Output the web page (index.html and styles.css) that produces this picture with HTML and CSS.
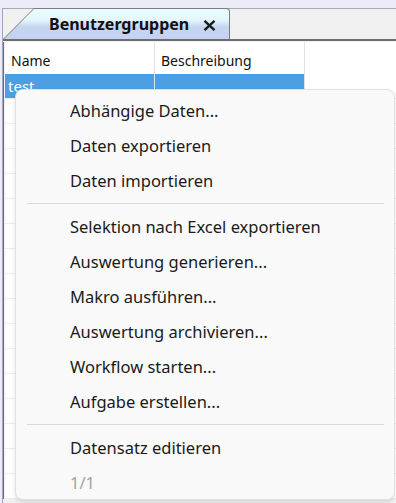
FILE: index.html
```html
<!DOCTYPE html>
<html lang="de">
<head>
<meta charset="utf-8">
<title>Benutzergruppen</title>
<link rel="stylesheet" href="styles.css">
</head>
<body>
<div class="window">
  <div class="frame">
    <div class="tabstrip">
      <div class="tab">
        <div class="tab-inner">
          <span class="tab-title">Benutzergruppen</span>
          <svg class="tab-close" width="13" height="11" viewBox="0 0 13 11"><path d="M1.5 0.8 L11.5 10.2 M11.5 0.8 L1.5 10.2" stroke="#1b1b1b" stroke-width="2.3" fill="none"/></svg>
        </div>
      </div>
    </div>
    <div class="tabline"></div>
    <div class="panel">
      <div class="grid">
        <div class="row head">
          <div class="cell c1">Name</div>
          <div class="cell c2">Beschreibung</div>
          <div class="cell c3"></div>
        </div>
        <div class="row sel">
          <div class="cell c1">test</div>
          <div class="cell c2"></div>
          <div class="cell c3"></div>
        </div>
        <div class="row"><div class="cell c1"></div><div class="cell c2"></div><div class="cell c3"></div></div>
        <div class="row"><div class="cell c1"></div><div class="cell c2"></div><div class="cell c3"></div></div>
        <div class="row"><div class="cell c1"></div><div class="cell c2"></div><div class="cell c3"></div></div>
        <div class="row"><div class="cell c1"></div><div class="cell c2"></div><div class="cell c3"></div></div>
        <div class="row"><div class="cell c1"></div><div class="cell c2"></div><div class="cell c3"></div></div>
        <div class="row"><div class="cell c1"></div><div class="cell c2"></div><div class="cell c3"></div></div>
        <div class="row"><div class="cell c1"></div><div class="cell c2"></div><div class="cell c3"></div></div>
        <div class="row"><div class="cell c1"></div><div class="cell c2"></div><div class="cell c3"></div></div>
        <div class="row"><div class="cell c1"></div><div class="cell c2"></div><div class="cell c3"></div></div>
        <div class="row"><div class="cell c1"></div><div class="cell c2"></div><div class="cell c3"></div></div>
        <div class="row"><div class="cell c1"></div><div class="cell c2"></div><div class="cell c3"></div></div>
        <div class="row"><div class="cell c1"></div><div class="cell c2"></div><div class="cell c3"></div></div>
        <div class="row"><div class="cell c1"></div><div class="cell c2"></div><div class="cell c3"></div></div>
        <div class="row"><div class="cell c1"></div><div class="cell c2"></div><div class="cell c3"></div></div>
        <div class="row"><div class="cell c1"></div><div class="cell c2"></div><div class="cell c3"></div></div>
        <div class="row"><div class="cell c1"></div><div class="cell c2"></div><div class="cell c3"></div></div>
      </div>
    </div>
  </div>
  <div class="menu">
    <div class="item">Abhängige Daten...</div>
    <div class="item">Daten exportieren</div>
    <div class="item">Daten importieren</div>
    <div class="sep"></div>
    <div class="item">Selektion nach Excel exportieren</div>
    <div class="item">Auswertung generieren...</div>
    <div class="item">Makro ausführen...</div>
    <div class="item">Auswertung archivieren...</div>
    <div class="item">Workflow starten...</div>
    <div class="item">Aufgabe erstellen...</div>
    <div class="sep"></div>
    <div class="item">Datensatz editieren</div>
    <div class="item disabled">1/1</div>
  </div>
</div>
</body>
</html>
```

FILE: styles.css
```css
html, body {
  margin: 0;
  padding: 0;
}
body {
  width: 396px;
  height: 503px;
  overflow: hidden;
  background: #ebecf8;
  font-family: "Noto Sans", "Open Sans", sans-serif;
}
.window {
  position: relative;
  height: 503px;
  padding-top: 8px;
  box-sizing: border-box;
}
.frame {
  margin-left: 2px;
  border-left: 1px solid #9ba6c9;
  background: #f0f0f0;
  height: 495px;
}
.tabstrip {
  height: 31px;
  border-top: 1px solid #a9a9b4;
  box-sizing: border-box;
  background: #f0f0f0;
}
.tab {
  width: 225px;
  height: 30px;
  margin-top: -1px;
  background: #7c7c82;
  clip-path: polygon(31px 0, 100% 0, 100% 100%, 0 100%);
  border-top-right-radius: 4px;
  padding: 1px 1px 0 1px;
  box-sizing: content-box;
}
.tab-inner {
  height: 30px;
  background: linear-gradient(#e8fdfe 0, #e4f6fc 11px, #c6d5f1 18px, #c3d2f0 100%);
  clip-path: polygon(30px 0, 100% 0, 100% 100%, 0 100%);
  border-top-right-radius: 3px;
  display: flex;
  align-items: center;
  padding-left: 45px;
  box-sizing: border-box;
}
.tab-title {
  font-weight: 700;
  font-size: 16px;
  color: #111;
}
.tab-close {
  margin-left: 14px;
  margin-top: 2px;
}
.tabline {
  height: 2px;
  background: #6e6e72;
}
.panel {
  margin-top: 1px;
  border-left: 1px solid #6e6e72;
  padding-left: 1px;
  background: #f0f0f0;
}
.grid {
  background: #fff;
}
.row {
  display: flex;
  height: 25px;
  box-sizing: border-box;
  border-bottom: 1px solid #ececec;
}
.row.head {
  height: 32px;
  border-bottom: none;
}
.cell {
  box-sizing: border-box;
  font-size: 14px;
  color: #111;
  display: flex;
  align-items: center;
}
.c1 {
  width: 150px;
  border-right: 1px solid #e2e2e2;
  padding-left: 3px;
}
.c2 {
  width: 150px;
  border-right: 1px solid #e2e2e2;
  padding-left: 6px;
}
.c3 {
  flex: 1;
}
.head .c1 {
  padding-left: 6px;
  padding-top: 4px;
}
.head .c2 {
  padding-top: 4px;
}
.sel .c1, .sel .c2 {
  background: #4c9fe2;
  color: #fff;
}
.sel .c1 {
  font-size: 15px;
}
.menu {
  position: absolute;
  left: 15px;
  top: 89px;
  width: 380px;
  height: 411px;
  box-sizing: border-box;
  background: #f9f9f9;
  border: 1px solid #e2e2e2;
  border-radius: 8px;
  box-shadow: 0 2px 4px rgba(0, 0, 0, 0.12);
  padding-top: 3px;
}
.item {
  height: 35px;
  display: flex;
  align-items: center;
  padding-left: 54px;
  font-size: 16.5px;
  color: #1a1a1a;
}
.item.disabled {
  color: #a3a3a3;
}
.sep {
  height: 1px;
  margin: 5px 10px 5px 11px;
  background: #d9d9d9;
}
```
